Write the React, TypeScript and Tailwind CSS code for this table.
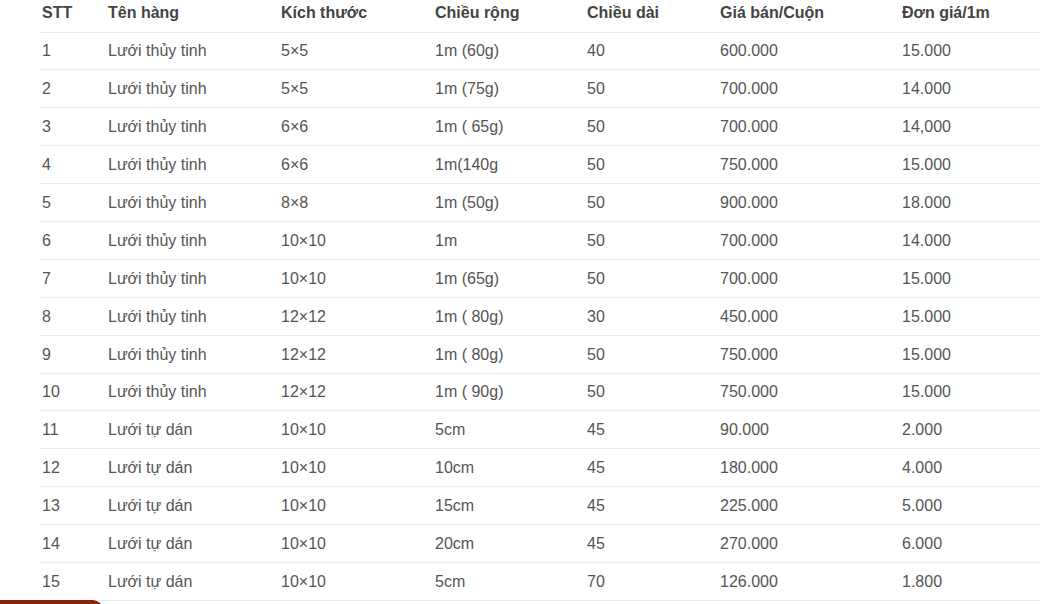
const rows: string[][] = [
  ['1', 'Lưới thủy tinh', '5×5', '1m (60g)', '40', '600.000', '15.000'],
  ['2', 'Lưới thủy tinh', '5×5', '1m (75g)', '50', '700.000', '14.000'],
  ['3', 'Lưới thủy tinh', '6×6', '1m ( 65g)', '50', '700.000', '14,000'],
  ['4', 'Lưới thủy tinh', '6×6', '1m(140g', '50', '750.000', '15.000'],
  ['5', 'Lưới thủy tinh', '8×8', '1m (50g)', '50', '900.000', '18.000'],
  ['6', 'Lưới thủy tinh', '10×10', '1m', '50', '700.000', '14.000'],
  ['7', 'Lưới thủy tinh', '10×10', '1m (65g)', '50', '700.000', '15.000'],
  ['8', 'Lưới thủy tinh', '12×12', '1m ( 80g)', '30', '450.000', '15.000'],
  ['9', 'Lưới thủy tinh', '12×12', '1m ( 80g)', '50', '750.000', '15.000'],
  ['10', 'Lưới thủy tinh', '12×12', '1m ( 90g)', '50', '750.000', '15.000'],
  ['11', 'Lưới tự dán', '10×10', '5cm', '45', '90.000', '2.000'],
  ['12', 'Lưới tự dán', '10×10', '10cm', '45', '180.000', '4.000'],
  ['13', 'Lưới tự dán', '10×10', '15cm', '45', '225.000', '5.000'],
  ['14', 'Lưới tự dán', '10×10', '20cm', '45', '270.000', '6.000'],
  ['15', 'Lưới tự dán', '10×10', '5cm', '70', '126.000', '1.800'],
]

const headers = ['STT', 'Tên hàng', 'Kích thước', 'Chiều rộng', 'Chiều dài', 'Giá bán/Cuộn', 'Đơn giá/1m']
const widths = ['w-[66px]', 'w-[173px]', 'w-[154px]', 'w-[152px]', 'w-[133px]', 'w-[182px]', 'w-[140px]']

export default function App() {
  return (
    <div
      className="relative w-[1050px] h-[604px] overflow-hidden bg-white"
      style={{ fontFamily: '"Liberation Sans", Arial, sans-serif' }}
    >
      <div className="ml-[40px] w-[1000px]">
        {/* Header */}
        <div className="flex h-[32.5px] border-b border-[#ececec] pt-[3px]">
          {headers.map((h, i) => (
            <div key={h} className={`${widths[i]} pl-[2px] text-[16px] leading-[19px] font-bold text-[#444]`}>
              {h}
            </div>
          ))}
        </div>

        {/* Rows */}
        {rows.map((r) => (
          <div key={r[0]} className="flex items-center h-[37.9px] border-b border-[#ececec]">
            {r.map((c, i) => (
              <div key={i} className={`${widths[i]} pl-[2px] text-[16px] leading-[19px] text-[#555]`}>
                {c}
              </div>
            ))}
          </div>
        ))}
      </div>

      {/* bottom-left floating button edge */}
      <div className="absolute left-0 top-[600px] w-[104px] h-[20px] bg-[#8c2112] rounded-tr-[12px]" />
    </div>
  )
}
